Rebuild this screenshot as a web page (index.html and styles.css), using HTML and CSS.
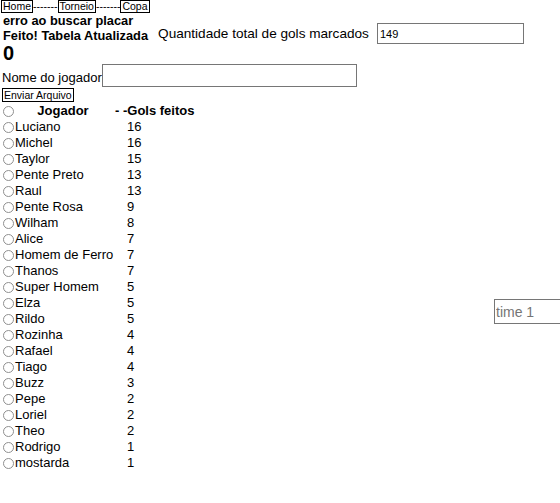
FILE: index.html
```html
<!DOCTYPE html>
<html lang="pt">
<head>
<meta charset="utf-8">
<link rel="stylesheet" href="styles.css">
</head>
<body>
<nav class="nav"><button class="navbtn">Home</button>-------<button class="navbtn">Torneio</button>-------<button class="navbtn">Copa</button></nav>
<div class="top">
  <div class="status">
    <div>erro ao buscar placar</div>
    <div>Feito! Tabela Atualizada</div>
  </div>
  <label class="total">Quantidade total de gols marcados <input class="field total-input" value="149"></label>
</div>
<div class="zero">0</div>
<div class="player"><span>Nome do jogador</span><input class="field player-input"></div>
<button class="send">Enviar Arquivo</button>
<div class="main">
  <div class="table">
    <div class="row head"><span class="radio"></span><span class="name">Jogador</span><span class="goals">- -Gols feitos</span></div>
    <div class="row"><span class="radio"></span><span class="name">Luciano</span><span class="goals">16</span></div>
    <div class="row"><span class="radio"></span><span class="name">Michel</span><span class="goals">16</span></div>
    <div class="row"><span class="radio"></span><span class="name">Taylor</span><span class="goals">15</span></div>
    <div class="row"><span class="radio"></span><span class="name">Pente Preto</span><span class="goals">13</span></div>
    <div class="row"><span class="radio"></span><span class="name">Raul</span><span class="goals">13</span></div>
    <div class="row"><span class="radio"></span><span class="name">Pente Rosa</span><span class="goals">9</span></div>
    <div class="row"><span class="radio"></span><span class="name">Wilham</span><span class="goals">8</span></div>
    <div class="row"><span class="radio"></span><span class="name">Alice</span><span class="goals">7</span></div>
    <div class="row"><span class="radio"></span><span class="name">Homem de Ferro</span><span class="goals">7</span></div>
    <div class="row"><span class="radio"></span><span class="name">Thanos</span><span class="goals">7</span></div>
    <div class="row"><span class="radio"></span><span class="name">Super Homem</span><span class="goals">5</span></div>
    <div class="row"><span class="radio"></span><span class="name">Elza</span><span class="goals">5</span></div>
    <div class="row"><span class="radio"></span><span class="name">Rildo</span><span class="goals">5</span></div>
    <div class="row"><span class="radio"></span><span class="name">Rozinha</span><span class="goals">4</span></div>
    <div class="row"><span class="radio"></span><span class="name">Rafael</span><span class="goals">4</span></div>
    <div class="row"><span class="radio"></span><span class="name">Tiago</span><span class="goals">4</span></div>
    <div class="row"><span class="radio"></span><span class="name">Buzz</span><span class="goals">3</span></div>
    <div class="row"><span class="radio"></span><span class="name">Pepe</span><span class="goals">2</span></div>
    <div class="row"><span class="radio"></span><span class="name">Loriel</span><span class="goals">2</span></div>
    <div class="row"><span class="radio"></span><span class="name">Theo</span><span class="goals">2</span></div>
    <div class="row"><span class="radio"></span><span class="name">Rodrigo</span><span class="goals">1</span></div>
    <div class="row"><span class="radio"></span><span class="name">mostarda</span><span class="goals">1</span></div>
  </div>
  <input class="field time" placeholder="time 1">
</div>
</body>
</html>
```
FILE: styles.css
```css
html, body {
  margin: 0;
  padding: 0;
  background: #fff;
}
body {
  font-family: "Liberation Sans", Arial, sans-serif;
  font-size: 13px;
  color: #000;
  overflow: hidden;
}
.nav {
  display: flex;
  align-items: center;
  height: 13px;
  padding-left: 1px;
  font-size: 10.5px;
  line-height: 11px;
}
.navbtn {
  font-family: "Liberation Sans", Arial, sans-serif;
  font-size: 10.5px;
  line-height: 11px;
  height: 13px;
  padding: 0 1px;
  margin: 0;
  border: 1px solid #000;
  background: #fff;
  color: #000;
}
.top {
  display: flex;
  align-items: flex-end;
  padding-left: 3px;
}
.status {
  font-weight: bold;
  font-size: 12.8px;
  line-height: 15px;
  white-space: nowrap;
}
.total {
  display: flex;
  align-items: center;
  gap: 8px;
  margin-left: 10px;
  margin-bottom: -1px;
  font-size: 13.6px;
  white-space: nowrap;
}
.field {
  font-family: "Liberation Sans", Arial, sans-serif;
  font-size: 11px;
  border: 1px solid #767676;
  border-radius: 0;
  padding: 0 2px;
  margin: 0;
  box-sizing: border-box;
  background: #fff;
  color: #000;
  outline: none;
}
.total-input {
  width: 147px;
  height: 21px;
}
.zero {
  font-size: 20px;
  font-weight: bold;
  line-height: 20px;
  padding-left: 3px;
}
.player {
  display: flex;
  align-items: flex-end;
  padding-left: 2px;
  margin-top: 1px;
}
.player span {
  line-height: 16px;
  margin-bottom: 1px;
  white-space: nowrap;
}
.player-input {
  width: 255px;
  height: 23px;
}
.send {
  display: block;
  font-family: "Liberation Sans", Arial, sans-serif;
  font-size: 10.5px;
  line-height: 11px;
  height: 14px;
  padding: 0 1px;
  margin: 1px 0 0 2px;
  border: 1px solid #000;
  background: #fff;
  color: #000;
}
.main {
  display: flex;
  align-items: flex-start;
  margin-top: 1px;
}
.table {
  display: flex;
  flex-direction: column;
  width: 200px;
  flex-shrink: 0;
}
.row {
  display: flex;
  align-items: center;
  height: 16px;
  line-height: 16px;
  white-space: nowrap;
}
.radio {
  width: 9px;
  height: 9px;
  border: 1px solid #8f8f8f;
  border-radius: 50%;
  margin-left: 3px;
  margin-right: 1px;
  flex-shrink: 0;
  background: #fff;
}
.row .name {
  width: 112px;
}
.head {
  font-weight: bold;
}
.head .name {
  width: 96px;
  text-align: center;
}
.head .goals {
  margin-left: 4px;
}
.time {
  width: 150px;
  height: 25px;
  font-size: 14px;
  margin-left: 294px;
  margin-top: 196px;
  flex-shrink: 0;
  border-color: #767676;
  padding-left: 1px;
}
.time::placeholder {
  color: #757575;
}
```
